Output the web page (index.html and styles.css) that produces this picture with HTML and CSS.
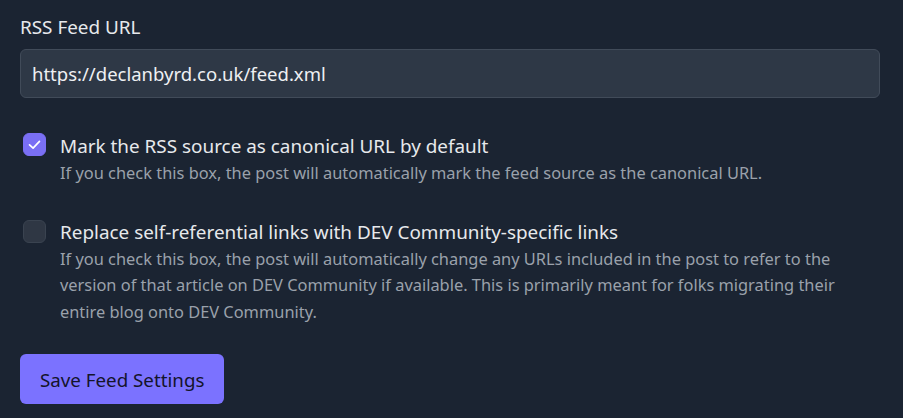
FILE: index.html
```html
<!DOCTYPE html>
<html lang="en">
<head>
<meta charset="utf-8">
<title>Feed Settings</title>
<link rel="stylesheet" href="styles.css">
</head>
<body>
<form class="settings">
  <div class="field">
    <label class="field-label" for="feed-url">RSS Feed URL</label>
    <input class="text-input" id="feed-url" type="text" value="https://declanbyrd.co.uk/feed.xml">
  </div>

  <div class="check-row first">
    <span class="checkbox checked">
      <svg viewBox="0 0 24 24" width="17" height="17"><polyline points="5,12.5 10,17 19,7.5" fill="none" stroke="#ffffff" stroke-width="2.4" stroke-linecap="round" stroke-linejoin="round"/></svg>
    </span>
    <div class="check-text">
      <div class="check-label">Mark the RSS source as canonical URL by default</div>
      <p class="check-desc">If you check this box, the post will automatically mark the feed source as the canonical URL.</p>
    </div>
  </div>

  <div class="check-row second">
    <span class="checkbox"></span>
    <div class="check-text">
      <div class="check-label">Replace self-referential links with DEV Community-specific links</div>
      <p class="check-desc">If you check this box, the post will automatically change any URLs included in the post to refer to the version of that article on DEV Community if available. This is primarily meant for folks migrating their entire blog onto DEV Community.</p>
    </div>
  </div>

  <button class="save-btn" type="button">Save Feed Settings</button>
</form>
</body>
</html>
```

FILE: styles.css
```css
* { box-sizing: border-box; }

html, body {
  margin: 0;
  background: #1b2432;
}

body {
  font-family: "Noto Sans", "Open Sans", sans-serif;
  color: #e7e9ec;
  padding: 12px 23px 0 20px;
}

.settings {
  display: flex;
  flex-direction: column;
  align-items: flex-start;
}

.field {
  display: flex;
  flex-direction: column;
  gap: 7px;
  width: 100%;
}

.field-label {
  font-size: 18.9px;
  line-height: 30px;
  color: #e7e9ec;
}

.text-input {
  width: 100%;
  height: 49px;
  padding: 0 11px;
  font: inherit;
  font-size: 18.5px;
  color: #eef0f3;
  background: #2e3846;
  border: 1px solid #414b59;
  border-radius: 6px;
  outline: none;
}

.check-row {
  display: flex;
  gap: 14px;
  width: 100%;
}

.check-row.first { margin-top: 34px; }
.check-row.second { margin-top: 31px; }

.checkbox {
  flex: none;
  width: 23px;
  height: 23px;
  margin-left: 3px;
  margin-top: 2px;
  border-radius: 6px;
  background: #2f3744;
  border: 1px solid #3a4350;
  display: flex;
  align-items: center;
  justify-content: center;
}

.checkbox.checked {
  background: #7a6ff4;
  border-color: #7a6ff4;
}

.check-row.first .checkbox { margin-top: 1px; }

.check-text {
  display: flex;
  flex-direction: column;
}

.check-label {
  font-size: 18.9px;
  line-height: 28px;
  color: #e7e9ec;
}

.check-desc {
  margin: 0;
  font-size: 16.4px;
  line-height: 26.5px;
  color: #9aa1ab;
}

.save-btn {
  margin-top: 29px;
  height: 50px;
  padding: 0 20px;
  font: inherit;
  font-size: 18.75px;
  color: #14142b;
  background: #7b72ff;
  border: none;
  border-radius: 6px;
}
```
